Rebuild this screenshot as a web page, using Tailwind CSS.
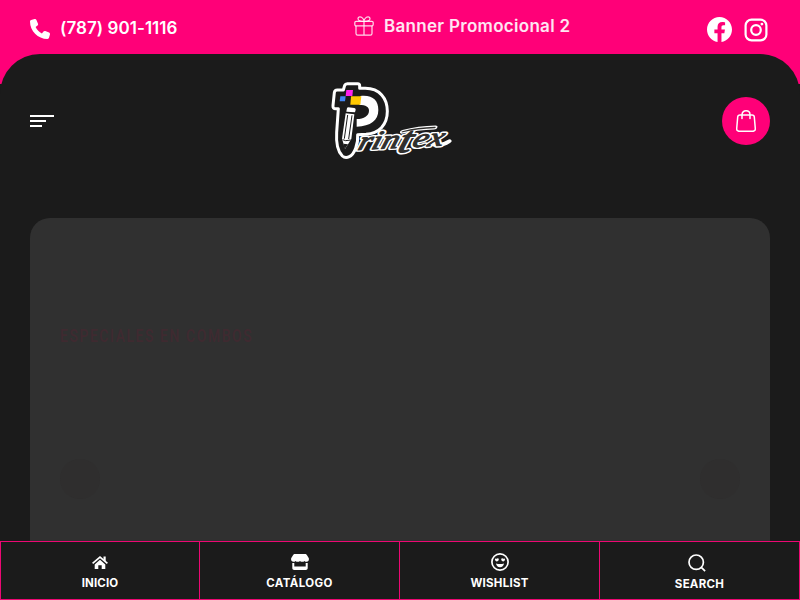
<!DOCTYPE html>
<html lang="es">
<head>
    <meta charset="UTF-8">
    <meta name="viewport" content="width=device-width, initial-scale=1.0">
    <title>Printex</title>
    <script src="https://cdn.jsdelivr.net/npm/@tailwindcss/browser@4"></script>
</head>
<body class="h-screen overflow-hidden bg-[#1b1b1b] font-['Inter','Liberation_Sans',sans-serif] text-white">
    <div class="flex h-full flex-col">
        <!-- Top bar -->
        <div class="h-[84px] shrink-0 bg-[#ff0078]">
            <div class="flex h-[54px] px-[30px]">
                <a href="#" class="flex w-[324px] items-center gap-[10px] pt-[3px]">
                    <svg class="size-5" viewBox="0 0 512 512" fill="currentColor"><path d="M164.900 24.600c-7.700-18.600-28-28.500-47.400-23.200l-88 24C12.100 30.200 0 46 0 64c0 247.400 200.600 448 448 448 18 0 33.800-12.100 38.600-29.500l24-88c5.300-19.400-4.600-39.700-23.200-47.400l-96-40c-16.300-6.800-35.200-2.100-46.300 11.600L304.700 368C234.300 334.700 177.300 277.700 144 207.300L193.300 167c13.700-11.200 18.400-30 11.600-46.300l-40-96z"/></svg>
                    <span class="text-[17px] font-semibold tracking-[0.05px] whitespace-nowrap">(787) 901-1116</span>
                </a>
                <div class="flex items-center gap-[10px] text-white/85">
                    <svg class="size-5 shrink-0 -translate-y-px" viewBox="0 0 20 20" fill="none" stroke="currentColor" stroke-width="1.2"><rect x=".8" y="5.300" width="18.400" height="4.600" rx="1.300"/><path d="M2 10v7.500c0 1 .7 1.700 1.700 1.700h12.600c1 0 1.700-.7 1.700-1.700V10M10 5.300v13.900M10 5.300C8 5.300 4 5 4 2.700 4 1.500 4.800.8 6 .8c2.400 0 4 3 4 4.500Zm0 0c2 0 6-.3 6-2.600C16 1.500 15.200.8 14 .8c-2.400 0-4 3-4 4.500Z"/></svg>
                    <span class="text-[17px] font-semibold tracking-[0.3px] whitespace-nowrap text-white/90">Banner Promocional 2</span>
                </div>
                <div class="ml-auto flex items-center gap-3 pt-[5px] pr-[2px]">
                    <svg class="size-[25px]" viewBox="0 0 24 24" fill="currentColor"><path d="M24 12.070C24 5.400 18.630 0 12 0S0 5.400 0 12.070C0 18.100 4.390 23.100 10.130 24v-8.440H7.080v-3.490h3.050V9.410c0-3.020 1.790-4.690 4.530-4.690 1.320 0 2.690.24 2.690.24v2.970h-1.520c-1.490 0-1.950.93-1.950 1.880v2.260h3.320l-.53 3.490h-2.790V24C19.610 23.100 24 18.100 24 12.070Z"/></svg>
                    <svg class="size-6" viewBox="0 0 24 24" fill="none" stroke="currentColor" stroke-width="2.2"><rect x="1.600" y="1.600" width="20.800" height="20.800" rx="6"/><circle cx="12" cy="12" r="4.800"/><circle cx="17.900" cy="6.100" r="1.400" fill="currentColor" stroke="none"/></svg>
                </div>
            </div>
        </div>

        <!-- Header -->
        <header class="-mt-[30px] grid h-[134px] shrink-0 grid-cols-3 items-center rounded-t-[40px] bg-[#1b1b1b] px-[30px]">
            <button class="flex w-6 flex-col gap-[3px]" aria-label="Menu">
                <span class="h-0.5 w-6 bg-white"></span>
                <span class="h-0.5 w-4 bg-white"></span>
                <span class="h-0.5 w-3 bg-white"></span>
            </button>
            <a href="#" class="-mx-4 flex justify-center">
                <svg class="h-[100px] w-[140px] shrink-0 translate-x-[-10px]" viewBox="0 0 420 300" overflow="visible">
                    <!-- badge -->
                    <g transform="translate(30 0)">
                        <path d="M44 43 Q46 38 52 38 H83 Q89 38 89 44 V52 H106 C149 52 172 82 172 121 C172 163 146 187 108 190 L83 191 C85 217 74 250 58 257 Q46 263 37 255 C22 240 18 215 20 184 L25 113 H17 Q8 113 9 104 L13 65 Q14 57 22 57 H40Z" fill="#1b1b1b" stroke="#fff" stroke-width="9" stroke-linejoin="round"/>
                        <path d="M91 75 C128 71 145 88 145 117 C145 148 122 166 80 167 L80 144 C102 144 117 134 117 119 C117 108 108 102 88 102Z" fill="#fff"/>
                        <path d="M49 57 H69 L67 75 H47Z" fill="#ff20ee"/>
                        <path d="M31 76 H47 L45 91 H29Z" fill="#4285f4"/>
                        <path d="M63 76 H94 L91 101 H61Z" fill="#ffc800"/>
                        <!-- pencil -->
                        <path d="M51 111 Q52 109 55 109 L73 111 Q77 112 77 116 L75 124 L49 122Z" fill="#fff"/>
                        <path d="M47 127 L73 130 L64 204 L45 234 L36 203Z" fill="#fff"/>
                        <path d="M53 132 L43 203 M66 133 L56 204 M38 206 L47 209 L62 207" fill="none" stroke="#1b1b1b" stroke-width="3"/>
                        <path d="M40 218 L54 220 L44 235Z" fill="#1b1b1b"/>
                    </g>
                    <!-- wordmark -->
                    <g transform="translate(110 237) rotate(-3) skewX(-20) scale(1.28 .95)" font-family="Liberation Serif, serif" font-style="italic" font-size="82" stroke-linejoin="round" stroke-linecap="round">
                        <g fill="#fff" stroke="#fff" stroke-width="12">
                            <text>rin<tspan font-size="116" dy="14">t</tspan><tspan dy="-14">ex</tspan></text>
                            <path d="M96 -50 Q130 -59 170 -58 M182 -4 Q200 2 214 -12" fill="none"/>
                        </g>
                        <g fill="#302f2d" stroke="#302f2d" stroke-width="3">
                            <text>rin<tspan font-size="116" dy="14">t</tspan><tspan dy="-14">ex</tspan></text>
                            <path d="M96 -50 Q130 -59 170 -58" fill="none" stroke-width="4"/>
                        </g>
                    </g>
                </svg>
            </a>
            <button class="flex size-12 items-center justify-center justify-self-end rounded-full bg-[#ff0078]" aria-label="Cart">
                <svg class="h-[22px] w-5" viewBox="0 0 20 22" fill="none" stroke="currentColor" stroke-width="1.5" stroke-linecap="round"><path d="M4 5h12c1.500 0 2.200.8 2.300 2l1 11.500c.1 1.800-.9 2.800-2.500 2.800H3.200c-1.600 0-2.600-1-2.500-2.800L1.700 7C1.800 5.800 2.500 5 4 5ZM6 8.500V4.700C6 2.400 7.700.8 10 .8s4 1.600 4 3.900v3.800"/></svg>
            </button>
        </header>

        <!-- Hero slider, at the start of its fade-in -->
        <main class="min-h-0 flex-1 px-[30px] pt-[30px]">
            <div class="h-full rounded-t-[20px] bg-[#303030] px-[30px] pt-[107px]">
                <h2 class="origin-left scale-x-[0.77] font-[Roboto,sans-serif] text-[18px] leading-[22px] font-medium tracking-[2.1px] text-[#3f2a30]">ESPECIALES EN COMBOS</h2>
                <div class="mt-[112px] flex justify-between">
                    <span class="size-10 rounded-full bg-[#2f2e2e]"></span>
                    <span class="size-10 rounded-full bg-[#2f2e2e]"></span>
                </div>
            </div>
        </main>

        <!-- Bottom navigation -->
        <nav class="grid h-[59px] shrink-0 grid-cols-4 border-y border-[#ed0873] bg-[#1b1b1b] text-[11.5px] leading-4 font-bold">
            <a href="#" class="flex flex-col items-center border-x border-[#ed0873] pt-[13px]">
                <svg class="h-4 w-4" viewBox="0 0 16 16" fill="currentColor"><path d="m8 4.800 5.300 4.700V14H9.700v-3.800H6.300V14H2.700V9.500Z"/><path d="m.6 8.400 7.400-6.300 7.400 6.300" fill="none" stroke="currentColor" stroke-width="1.700"/><path d="M11.500 1.500h2.200v5l-2.200-2Z"/></svg>
                <span class="mt-1 tracking-[0.15px]">INICIO</span>
            </a>
            <a href="#" class="flex flex-col items-center border-r border-[#ed0873] pt-3">
                <svg class="h-4 w-[18px]" viewBox="0 0 18 16" fill="currentColor"><path d="M4 0h10c1 0 1.500.3 2 1.200L17.700 4c.7 1.800-.3 3.600-2 3.800-1 .1-1.700-.3-2.200-.9-.6.6-1.300.9-2.200.9-.9 0-1.700-.3-2.300-.9-.6.600-1.400.9-2.300.9-.9 0-1.600-.3-2.200-.9-.5.600-1.200 1-2.200.9C.6 7.600-.4 5.800.3 4L2 1.200C2.500.3 3 0 4 0ZM1.300 9h2v3.500h11.400V9h2v5c0 1.200-.7 2-1.900 2H3.200c-1.200 0-1.900-.8-1.900-2Z"/></svg>
                <span class="mt-[5px] tracking-[0.4px]">CATÁLOGO</span>
            </a>
            <a href="#" class="flex flex-col items-center border-r border-[#ed0873] pt-[11px]">
                <svg class="size-[18px]" viewBox="0 0 18 18" fill="currentColor"><circle cx="9" cy="9" r="8.100" fill="none" stroke="currentColor" stroke-width="1.700"/><path d="M4 6.500c0-1 1.200-1.300 1.700-.6.600-1 2.100-.6 2.100.6 0 1.100-1 1.700-2 2C4.900 8.200 4 7.600 4 6.500ZM10.200 6.500c0-1.200 1.500-1.600 2.100-.6.500-.7 1.700-.4 1.700.6 0 1.100-.9 1.700-1.800 2-1-.3-2-.9-2-2ZM5 10.500c2.500.8 5.500.8 8 0-.3 2.300-1.900 3.700-4 3.700s-3.700-1.400-4-3.700Z"/></svg>
                <span class="mt-1 tracking-[0.25px]">WISHLIST</span>
            </a>
            <a href="#" class="flex flex-col items-center border-r border-[#ed0873] pt-3">
                <svg class="mr-[5px] size-[18px]" viewBox="0 0 18 18" fill="none" stroke="currentColor" stroke-width="1.700"><circle cx="8.200" cy="8.200" r="7.200"/><path d="m13.300 13.300 3.800 3.800"/></svg>
                <span class="mt-1 tracking-[0.25px]">SEARCH</span>
            </a>
        </nav>
    </div>
</body>
</html>
